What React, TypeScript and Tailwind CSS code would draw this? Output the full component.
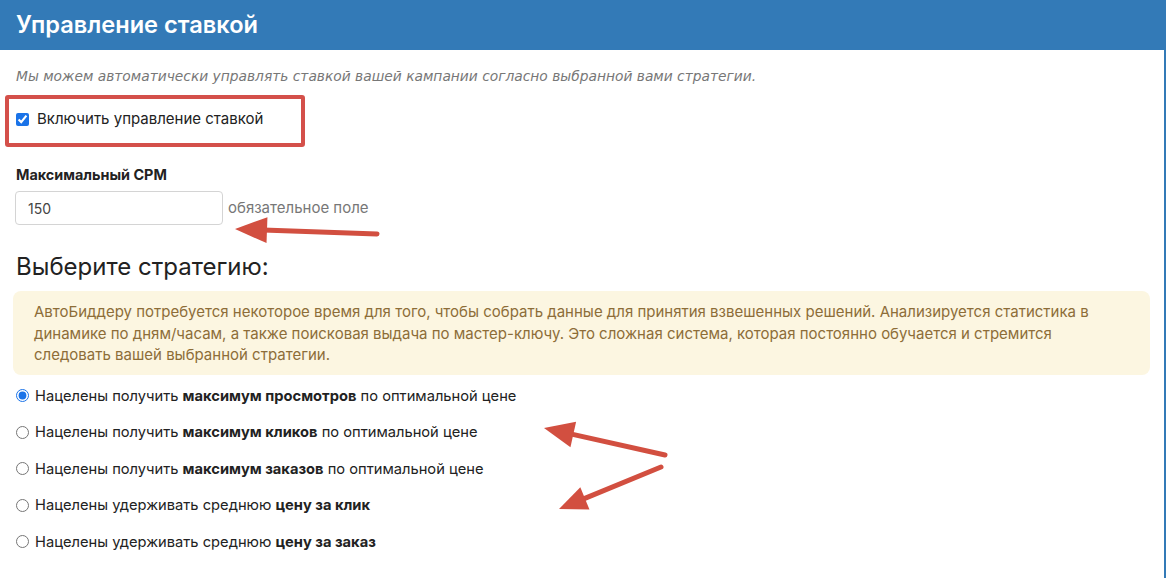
import React from "react";

const font = { fontFamily: "Inter, 'Noto Sans', sans-serif" };

function Arrow({ x1, y1, x2, y2, head = 30, wide = 13 }: { x1: number; y1: number; x2: number; y2: number; head?: number; wide?: number }) {
  const dx = x2 - x1;
  const dy = y2 - y1;
  const len = Math.sqrt(dx * dx + dy * dy);
  const ux = dx / len;
  const uy = dy / len;
  const bx = x2 - ux * head;
  const by = y2 - uy * head;
  const nx = -uy;
  const ny = ux;
  const p1 = `${bx + nx * wide},${by + ny * wide}`;
  const p2 = `${bx - nx * wide},${by - ny * wide}`;
  const lx = x2 - ux * (head - 4);
  const ly = y2 - uy * (head - 4);
  return (
    <g>
      <line x1={x1} y1={y1} x2={lx} y2={ly} stroke="#d24f40" strokeWidth={5} strokeLinecap="round" />
      <polygon points={`${x2},${y2} ${p1} ${p2}`} fill="#d24f40" />
    </g>
  );
}

const options: { pre: string; bold: string; post: string; checked?: boolean }[] = [
  { pre: "Нацелены получить ", bold: "максимум просмотров", post: " по оптимальной цене", checked: true },
  { pre: "Нацелены получить ", bold: "максимум кликов", post: " по оптимальной цене" },
  { pre: "Нацелены получить ", bold: "максимум заказов", post: " по оптимальной цене" },
  { pre: "Нацелены удерживать среднюю ", bold: "цену за клик", post: "" },
  { pre: "Нацелены удерживать среднюю ", bold: "цену за заказ", post: "" },
];

export default function App() {
  return (
    <div className="relative w-[1168px] h-[578px] overflow-hidden bg-white" style={font}>
      <div className="w-[1166px] h-[578px] border-r-2 border-[#337ab7]">
        <div className="h-[50px] bg-[#337ab7] px-4 flex items-center">
          <h1 className="text-white text-[23.6px] font-semibold leading-none">Управление ставкой</h1>
        </div>
        <div className="px-4">
          <p
            className="pt-4 text-[13.8px] leading-5 italic text-[#777]"
            style={{ fontFamily: "'DejaVu Sans', Verdana, sans-serif" }}
          >
            Мы можем автоматически управлять ставкой вашей кампании согласно выбранной вами стратегии.
          </p>
          <div className="mt-[9px] ml-[-11px] w-[300px] h-[52px] border-4 border-[#d4504a] rounded-[3px] flex items-start pl-[7px] pt-[10px]">
            <label className="flex items-center h-5">
              <input type="checkbox" defaultChecked className="m-0 w-[13px] h-[13px] accent-[#1a73e8]" />
              <span className="ml-[8px] text-[15px] text-[#222]">Включить управление ставкой</span>
            </label>
          </div>
          <div className="mt-[18px] text-[14.4px] leading-5 font-bold text-[#222]">Максимальный CPM</div>
          <div className="mt-[6px] flex items-center">
            <div className="w-[208px] h-[34px] ml-[-1px] border border-[#d4d4d4] rounded-[4px] flex items-center pl-[12px] text-[14px] text-[#444]">
              150
            </div>
            <span className="ml-[5px] text-[15px] text-[#777]">обязательное поле</span>
          </div>
          <h2 className="mt-[28px] text-[24px] leading-[28px] text-[#222]">Выберите стратегию:</h2>
          <div className="mt-[10px] ml-[-3px] w-[1137px] bg-[#fcf6e1] rounded-[8px] pl-[21px] pr-[36px] pt-[10px] pb-[9px] text-[15px] leading-[21.5px] text-[#8d6d38]">
            АвтоБиддеру потребуется некоторое время для того, чтобы собрать данные для принятия взвешенных решений. Анализируется статистика в динамике по дням/часам, а также поисковая выдача по мастер-ключу. Это сложная система, которая постоянно обучается и стремится следовать вашей выбранной стратегии.
          </div>
          <div className="mt-[3px]">
            {options.map((o, i) => (
              <label key={i} className="h-[36.5px] flex items-center">
                <input
                  type="radio"
                  name="strategy"
                  defaultChecked={o.checked}
                  className="m-0 w-[13px] h-[13px] accent-[#1a73e8]"
                />
                <span className="ml-[6px] text-[14.7px] text-[#222]">
                  {o.pre}
                  <b className="font-bold">{o.bold}</b>
                  {o.post}
                </span>
              </label>
            ))}
          </div>
        </div>
      </div>
      <svg className="absolute inset-0 pointer-events-none" width={1168} height={578}>
        <Arrow x1={377} y1={234} x2={235} y2={229} head={32} wide={13} />
        <Arrow x1={665} y1={455} x2={544} y2={428} head={30} wide={13} />
        <Arrow x1={661} y1={467} x2={559} y2={509} head={28} wide={12} />
      </svg>
    </div>
  );
}
